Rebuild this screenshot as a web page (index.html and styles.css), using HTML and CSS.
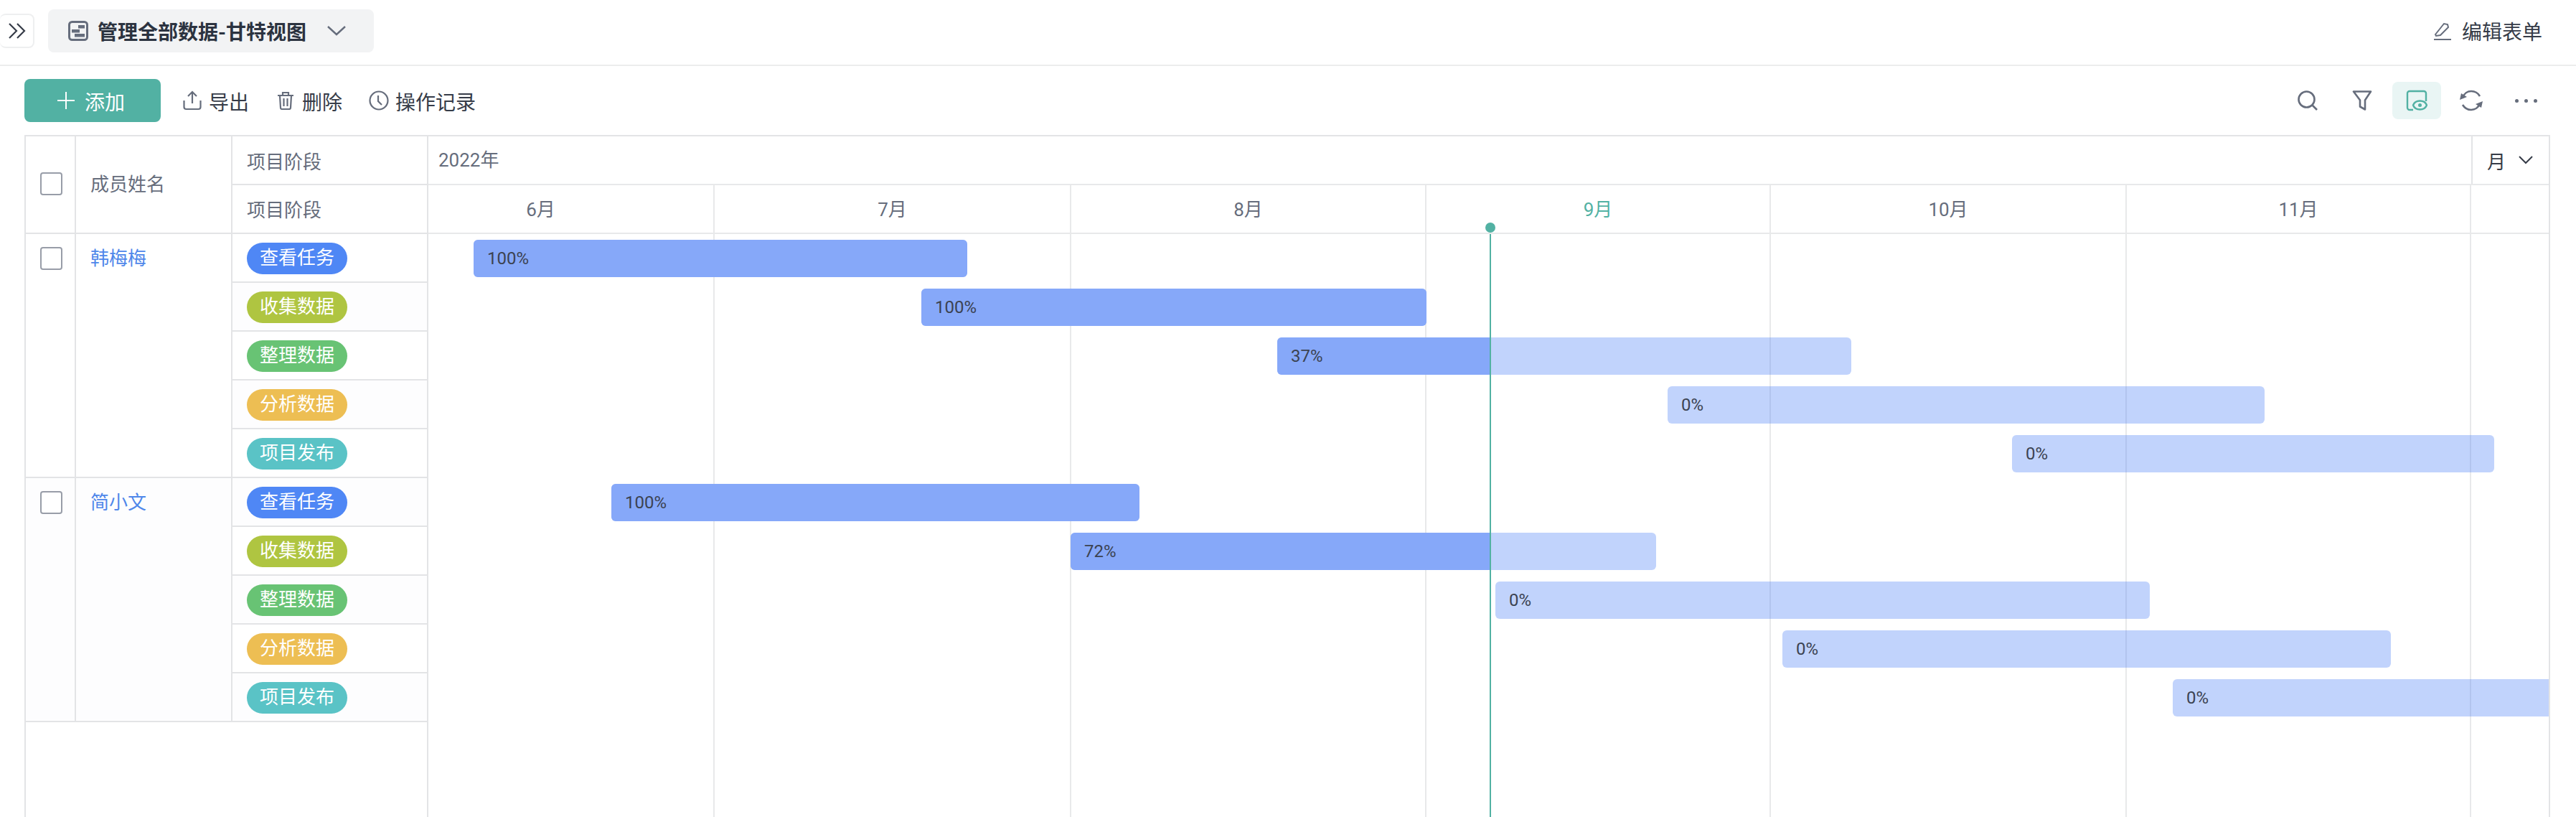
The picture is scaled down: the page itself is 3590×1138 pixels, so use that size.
FILE: index.html
```html
<!DOCTYPE html>
<html lang="zh-CN">
<head>
    <meta charset="UTF-8">
    <title>管理全部数据-甘特视图</title>
    <link rel="stylesheet" href="styles.css">
</head>
<body>
    <header class="topbar">
        <div class="topbar-left">
            <button class="collapse">
                <svg width="24" height="24" viewBox="0 0 24 22" fill="none" stroke="#363c48" stroke-width="2.2"><path d="M1 1l10 10L1 21M12 1l10 10-10 10"/></svg>
            </button>
            <div class="view-pill">
                <svg width="28" height="28" viewBox="0 0 28 28" fill="none"><rect x="1.5" y="1.5" width="25" height="25" rx="4" stroke="#666d7c" stroke-width="3"/><rect x="14" y="6" width="9" height="4.5" fill="#666d7c"/><rect x="5" y="12" width="11" height="4.5" fill="#666d7c"/><rect x="9" y="18" width="14" height="4.5" fill="#666d7c"/></svg>
                <span class="view-name">管理全部数据-甘特视图</span>
                <svg class="view-arrow" width="26" height="14" viewBox="0 0 26 14" fill="none" stroke="#666d7c" stroke-width="2.4"><path d="M1 1l12 11L25 1"/></svg>
            </div>
        </div>
        <div class="edit-form">
            <svg width="26" height="26" viewBox="0 0 26 26" fill="none" stroke="#666d7c" stroke-width="2"><path d="M3 18L15 3l5 1 1 4-11 11-6 1zM1 25h24"/></svg>
            <span>编辑表单</span>
        </div>
    </header>

    <div class="toolbar">
        <div class="tools">
            <button class="add-btn">
                <svg width="24" height="24" viewBox="0 0 24 24" stroke="#fff" stroke-width="2"><path d="M12 0v24M0 12h24"/></svg>
                <span>添加</span>
            </button>
            <div class="tool tool-export">
                <svg width="26" height="28" viewBox="0 0 26 28" fill="none" stroke="#666d7c" stroke-width="2.2"><path d="M13 18V2M7 8l6-6 6 6M1.5 14v9a3 3 0 0 0 3 3h17a3 3 0 0 0 3-3v-9"/></svg>
                <span>导出</span>
            </div>
            <div class="tool tool-delete">
                <svg width="22" height="26" viewBox="0 0 22 26" fill="none" stroke="#666d7c" stroke-width="2.2"><path d="M0 6h22M7 6V2h8v4M3 6l1 17a2 2 0 0 0 2 2h10a2 2 0 0 0 2-2l1-17M8.500 10v11M13.500 10v11"/></svg>
                <span>删除</span>
            </div>
            <div class="tool tool-log">
                <svg width="28" height="28" viewBox="0 0 28 28" fill="none" stroke="#666d7c" stroke-width="2.2"><circle cx="14" cy="14" r="12.500"/><path d="M13 7v8l5 5"/></svg>
                <span>操作记录</span>
            </div>
        </div>
        <div class="actions">
            <div class="action">
                <svg width="28" height="28" viewBox="0 0 28 28" fill="none" stroke="#666d7c" stroke-width="2.600"><circle cx="12.500" cy="12.500" r="11"/><path d="M20 20l7 7"/></svg>
            </div>
            <div class="action">
                <svg width="28" height="28" viewBox="0 0 28 28" fill="none" stroke="#666d7c" stroke-width="2.600" stroke-linejoin="round"><path d="M2 1.500h24l-8 12v13l-7-4v-9z"/></svg>
            </div>
            <div class="action action-on">
                <svg width="30" height="30" viewBox="0 0 30 30" fill="none" stroke="#52b1a3" stroke-width="2.400"><path d="M10 28H5a3 3 0 0 1-3-3V5a3 3 0 0 1 3-3h20a3 3 0 0 1 3 3v11"/><path d="M10 21.500c3-8 16-8 19 0-3 8-16 8-19 0z" fill="#e9f5f4"/><circle cx="19.500" cy="21.500" r="2.500" fill="#52b1a3" stroke="none"/></svg>
            </div>
            <div class="action">
                <svg width="32" height="30" viewBox="0 0 32 30" fill="none" stroke="#666d7c" stroke-width="2.600"><path d="M4 11C6 5 11 2 16 2c5 0 9 2 12 7M28 19c-2 6-7 9-12 9-5 0-9-2-12-7"/><path d="M0 14l2-9 8 5zM32 16l-2 9-8-5z" fill="#666d7c" stroke="none"/></svg>
            </div>
            <div class="action more">
                <i></i><i></i><i></i>
            </div>
        </div>
    </div>

    <div class="gantt">
        <div class="left-pane">
            <div class="left-head">
                <div class="cell-check"><span class="checkbox"></span></div>
                <div class="cell-name head-name">成员姓名</div>
                <div class="head-stages">
                    <div class="head-stage">项目阶段</div>
                    <div class="head-stage">项目阶段</div>
                </div>
            </div>

            <div class="group">
                <div class="cell-check"><span class="checkbox"></span></div>
                <div class="cell-name"><a>韩梅梅</a></div>
                <div class="stages">
                    <div class="stage"><span class="pill blue">查看任务</span></div>
                    <div class="stage"><span class="pill lime">收集数据</span></div>
                    <div class="stage"><span class="pill green">整理数据</span></div>
                    <div class="stage"><span class="pill yellow">分析数据</span></div>
                    <div class="stage"><span class="pill teal">项目发布</span></div>
                </div>
            </div>

            <div class="group group-alt">
                <div class="cell-check"><span class="checkbox"></span></div>
                <div class="cell-name"><a>简小文</a></div>
                <div class="stages">
                    <div class="stage"><span class="pill blue">查看任务</span></div>
                    <div class="stage"><span class="pill lime">收集数据</span></div>
                    <div class="stage"><span class="pill green">整理数据</span></div>
                    <div class="stage"><span class="pill yellow">分析数据</span></div>
                    <div class="stage"><span class="pill teal">项目发布</span></div>
                </div>
            </div>
        </div>

        <div class="chart">
            <div class="year-row">
                <div class="year">2022年</div>
                <div class="scale"><span>月</span>
                    <svg width="20" height="12" viewBox="0 0 20 12" fill="none" stroke="#363c48" stroke-width="2"><path d="M1 1l9 9 9-9"/></svg>
                </div>
            </div>
            <div class="months">
                <div class="month m-jun">6月</div>
                <div class="month m-jul">7月</div>
                <div class="month m-aug">8月</div>
                <div class="month m-sep today">9月</div>
                <div class="month m-oct">10月</div>
                <div class="month m-nov">11月</div>
                <div class="month m-dec"></div>
            </div>
            <div class="timeline">
                <div class="gridlines">
                    <div class="m-jun"></div>
                    <div class="m-jul"></div>
                    <div class="m-aug"></div>
                    <div class="m-sep"></div>
                    <div class="m-oct"></div>
                    <div class="m-nov"></div>
                    <div class="m-dec"></div>
                </div>
                <div class="bar-row"><div class="bar" style="margin-left:63px;width:688px"><div class="done" style="width:100%"></div><span>100%</span></div></div>
                <div class="bar-row"><div class="bar" style="margin-left:687px;width:704px"><div class="done" style="width:100%"></div><span>100%</span></div></div>
                <div class="bar-row"><div class="bar" style="margin-left:1183px;width:800px"><div class="done" style="width:37%"></div><span>37%</span></div></div>
                <div class="bar-row"><div class="bar" style="margin-left:1727px;width:832px"><span>0%</span></div></div>
                <div class="bar-row"><div class="bar" style="margin-left:2207px;width:672px"><span>0%</span></div></div>
                <div class="bar-row"><div class="bar" style="margin-left:255px;width:736px"><div class="done" style="width:100%"></div><span>100%</span></div></div>
                <div class="bar-row"><div class="bar" style="margin-left:895px;width:816px"><div class="done" style="width:71.7%"></div><span>72%</span></div></div>
                <div class="bar-row"><div class="bar" style="margin-left:1487px;width:912px"><span>0%</span></div></div>
                <div class="bar-row"><div class="bar" style="margin-left:1887px;width:848px"><span>0%</span></div></div>
                <div class="bar-row"><div class="bar" style="margin-left:2431px;width:800px"><span>0%</span></div></div>
                <div class="today-line"></div>
            </div>
        </div>
    </div>
</body>
</html>
```

FILE: styles.css
```css
* {
    box-sizing: border-box;
}
html, body {
    height: 100%;
}
body {
    margin: 0;
    font-family: Roboto, "Noto Sans CJK SC", sans-serif;
    font-size: 26px;
    color: #666d7c;
    background-color: #fff;
    overflow: hidden;
    display: flex;
    flex-direction: column;
}
svg {
    display: block;
    flex: none;
}

/* top bar */
.topbar {
    height: 92px;
    flex: none;
    display: flex;
    justify-content: space-between;
    align-items: center;
    border-bottom: 2px solid #eceded;
    padding: 0 47px 4px 0;
}
.topbar-left {
    display: flex;
    align-items: center;
    gap: 19px;
}
.collapse {
    width: 48px;
    height: 48px;
    padding: 0 0 0 12px;
    background: #fff;
    border: 2px solid #eeeff0;
    border-left: none;
    border-radius: 8px;
}
.view-pill {
    width: 454px;
    height: 60px;
    padding-left: 28px;
    background-color: #f2f3f4;
    border-radius: 8px;
    display: flex;
    align-items: center;
}
.view-name {
    margin-left: 13px;
    font-size: 28px;
    font-weight: 700;
    color: #2c3340;
}
.view-arrow {
    margin-left: 29px;
}
.edit-form {
    display: flex;
    align-items: center;
    gap: 14px;
    font-size: 28px;
    color: #363c48;
}

/* toolbar */
.toolbar {
    height: 96px;
    flex: none;
    display: flex;
    justify-content: space-between;
    align-items: center;
    padding: 0 36px 0 34px;
}
.tools {
    display: flex;
    align-items: center;
}
.add-btn {
    width: 190px;
    height: 60px;
    padding: 0 4px 0 0;
    background-color: #52b1a3;
    border: none;
    border-radius: 8px;
    color: #fff;
    font: inherit;
    font-size: 28px;
    display: flex;
    align-items: center;
    justify-content: center;
    gap: 14px;
}
.add-btn span,
.tool span {
    margin-top: 2px;
}
.tool {
    display: flex;
    align-items: center;
    gap: 10px;
    font-size: 28px;
    color: #363c48;
}
.tool-export {
    margin-left: 31px;
}
.tool-delete {
    margin-left: 40px;
    gap: 12px;
}
.tool-log {
    margin-left: 37px;
    gap: 9px;
}
.actions {
    display: flex;
    align-items: center;
}
.action {
    width: 68px;
    height: 52px;
    margin-left: 8px;
    border-radius: 8px;
    display: flex;
    align-items: center;
    justify-content: center;
}
.action-on {
    background-color: #e9f5f4;
}
.more {
    gap: 8px;
}
.more i {
    width: 5px;
    height: 5px;
    border-radius: 50%;
    background-color: #666d7c;
}

/* gantt table */
.gantt {
    flex: 1;
    min-height: 0;
    display: flex;
    margin: 0 36px 0 34px;
    border-top: 2px solid #e3e4e6;
    border-left: 2px solid #e3e4e6;
    border-right: 2px solid #e3e4e6;
    overflow: hidden;
}
.left-pane {
    width: 561px;
    flex: none;
    border-right: 2px solid #e3e4e6;
}
.left-head,
.group {
    display: flex;
    border-bottom: 2px solid #e3e4e6;
}
.left-head {
    height: 136px;
    align-items: stretch;
}
.cell-check {
    width: 70px;
    flex: none;
    padding-left: 3px;
    border-right: 2px solid #e3e4e6;
    display: flex;
    justify-content: center;
}
.left-head .cell-check {
    align-items: center;
    padding-bottom: 2px;
}
.group .cell-check {
    padding-top: 18px;
}
.checkbox {
    display: block;
    width: 31px;
    height: 32px;
    border: 2px solid #989da8;
    border-radius: 4px;
    background-color: #fff;
}
.cell-name {
    width: 218px;
    flex: none;
    padding: 13px 20px;
    border-right: 2px solid #e3e4e6;
}
.head-name {
    display: flex;
    align-items: center;
    padding-top: 0;
    padding-bottom: 5px;
}
.cell-name a {
    color: #4f87ea;
}
.head-stages,
.stages {
    flex: 1;
}
.head-stage {
    height: 68px;
    padding-left: 20px;
    display: flex;
    align-items: center;
}
.head-stage:first-child {
    border-bottom: 2px solid #e3e4e6;
}
.head-stage:last-child {
    padding-bottom: 3px;
}
.group-alt {
    background-color: #fdfdfe;
}
.stage {
    height: 68px;
    padding: 12px 0 0 20px;
    border-bottom: 2px solid #e3e4e6;
    background-color: #fff;
}
.stage:nth-child(even) {
    background-color: #fdfdfe;
}
.group-alt .stage {
    background-color: #fdfdfe;
}
.group-alt .stage:nth-child(even) {
    background-color: #fff;
}
.stage:last-child {
    border-bottom: none;
    height: 66px;
}
.pill {
    display: block;
    width: 140px;
    height: 44px;
    line-height: 42px;
    text-align: center;
    border-radius: 22px;
    color: #fff;
}
.blue { background-color: #4f87f5; }
.lime { background-color: #afc541; }
.green { background-color: #68c374; }
.yellow { background-color: #edbe53; }
.teal { background-color: #5ac3c6; }

/* chart side */
.chart {
    flex: 1;
    min-width: 0;
    display: flex;
    flex-direction: column;
    overflow: hidden;
}
.year-row {
    height: 68px;
    flex: none;
    display: flex;
    justify-content: space-between;
    border-bottom: 2px solid #e8e9ea;
}
.year {
    padding-left: 14px;
    line-height: 66px;
}
.scale {
    width: 108px;
    border-left: 2px solid #e3e4e6;
    display: flex;
    align-items: center;
    gap: 18px;
    padding-left: 20px;
    color: #363c48;
}
.months {
    height: 68px;
    flex: none;
    display: flex;
    border-bottom: 2px solid #e8e9ea;
}
.month {
    display: flex;
    align-items: center;
    justify-content: center;
    padding-bottom: 3px;
    border-right: 2px solid #e8e9ea;
}
.month.m-jun {
    padding-right: 84px;
}
.month.m-dec {
    border-right: none;
}
.today {
    color: #52b1a3;
}
.m-jun { width: 399px; }
.m-jul { width: 497px; }
.m-aug { width: 495px; }
.m-sep { width: 480px; }
.m-oct { width: 496px; }
.m-nov { width: 480px; }
.m-dec { flex: 1; }
.timeline {
    flex: 1;
    position: relative;
}
.gridlines {
    position: absolute;
    top: 0;
    bottom: 0;
    left: 0;
    right: 0;
    display: flex;
}
.gridlines div {
    border-right: 2px solid #e8e9ea;
}
.gridlines .m-dec {
    border-right: none;
}
.bar-row {
    height: 68px;
    padding-top: 8px;
    position: relative;
}
.bar {
    height: 52px;
    position: relative;
    background-color: rgba(78, 128, 245, 0.35);
    border-radius: 6px;
    overflow: hidden;
    display: flex;
    align-items: center;
    padding-left: 19px;
    font-size: 24px;
    color: #3c4352;
}
.bar span {
    position: relative;
}
.done {
    position: absolute;
    top: 0;
    bottom: 0;
    left: 0;
    background-color: #86a8f9;
}
.today-line {
    position: absolute;
    top: 0;
    bottom: 0;
    left: 1479px;
    width: 2px;
    background-color: #52b1a3;
}
.today-line::before {
    content: "";
    position: absolute;
    top: -16px;
    left: -6px;
    width: 14px;
    height: 14px;
    border-radius: 50%;
    background-color: #52b1a3;
}
```
